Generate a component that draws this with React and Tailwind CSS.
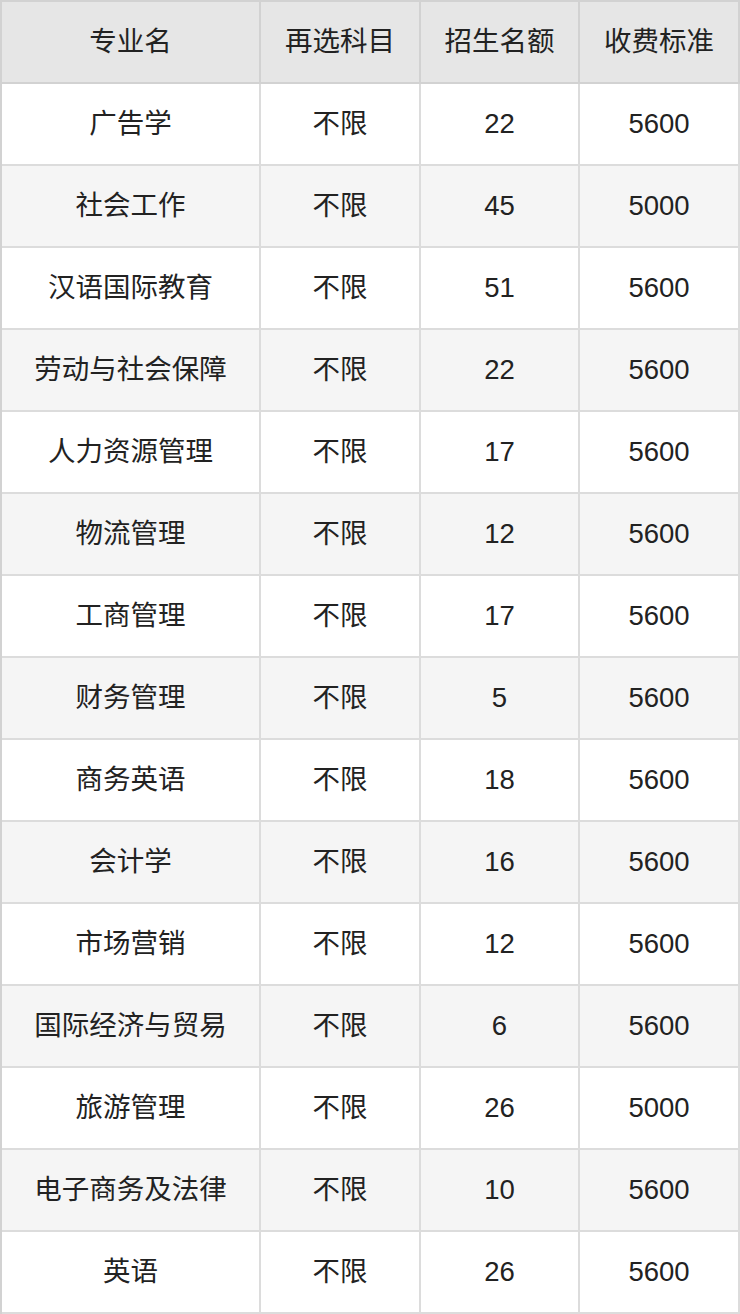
import React from "react";

const rows = [
  ["广告学", "不限", "22", "5600"],
  ["社会工作", "不限", "45", "5000"],
  ["汉语国际教育", "不限", "51", "5600"],
  ["劳动与社会保障", "不限", "22", "5600"],
  ["人力资源管理", "不限", "17", "5600"],
  ["物流管理", "不限", "12", "5600"],
  ["工商管理", "不限", "17", "5600"],
  ["财务管理", "不限", "5", "5600"],
  ["商务英语", "不限", "18", "5600"],
  ["会计学", "不限", "16", "5600"],
  ["市场营销", "不限", "12", "5600"],
  ["国际经济与贸易", "不限", "6", "5600"],
  ["旅游管理", "不限", "26", "5000"],
  ["电子商务及法律", "不限", "10", "5600"],
  ["英语", "不限", "26", "5600"],
];

const headers = ["专业名", "再选科目", "招生名额", "收费标准"];

const App = () => {
  return (
    <div
      className="w-[740px] bg-white text-[#222] text-[27.5px]"
      style={{ fontFamily: '"Liberation Sans", "Noto Sans CJK SC", sans-serif' }}
    >
      <div className="grid grid-cols-[259px_160px_159px_160px] border-t-2 border-l-2 border-[#d2d2d2]">
        {/* header */}
        {headers.map((h) => (
          <div
            key={h}
            className="h-[82px] flex items-center justify-center bg-[#e6e6e6] border-r-2 border-b-2 border-[#d2d2d2]"
          >
            {h}
          </div>
        ))}
        {/* body */}
        {rows.map((r, i) =>
          r.map((cell, j) => (
            <div
              key={i + "-" + j}
              className={
                "h-[82px] flex items-center justify-center border-r-2 border-b-2 border-[#dcdcdc] " +
                (i % 2 === 1 ? "bg-[#f5f5f5]" : "bg-white")
              }
            >
              {cell}
            </div>
          ))
        )}
      </div>
    </div>
  );
};

export default App;
